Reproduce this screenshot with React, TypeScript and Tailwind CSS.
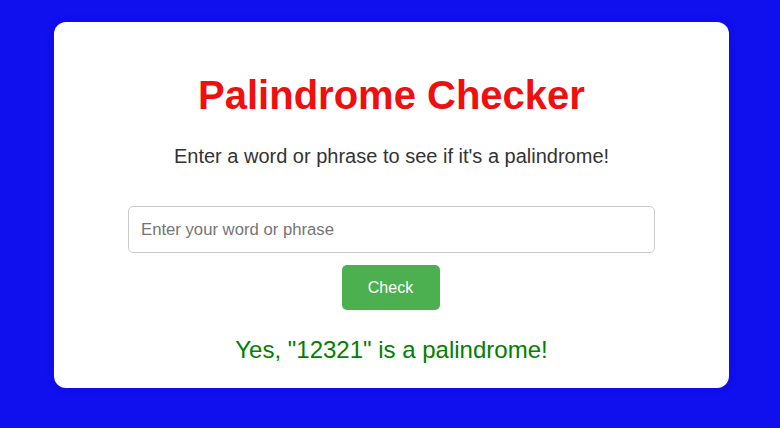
import { useState } from "react";

export default function App() {
  const [text, setText] = useState("");
  const [result] = useState('Yes, "12321" is a palindrome!');

  return (
    <div className="min-h-screen w-full bg-[#100fee] pl-[54px] pt-[22px] font-['Liberation_Sans',Arial,sans-serif]">
      <div className="w-[675px] rounded-[12px] bg-white px-[74px] pt-[50px] pb-[25px] shadow-[0_0_10px_rgba(0,0,0,0.1)] flex flex-col items-center">
        <h1 className="text-[40px] leading-[46px] font-bold text-[#f00f0f]">
          Palindrome Checker
        </h1>

        <p className="mt-[27px] text-[20px] leading-[23px] text-[#333333]">
          Enter a word or phrase to see if it's a palindrome!
        </p>

        <input
          type="text"
          value={text}
          onChange={(e) => setText(e.target.value)}
          placeholder="Enter your word or phrase"
          className="mt-[38px] h-[47px] w-full rounded-[5px] border border-[#cccccc] px-[12px] text-[16.7px] text-[#333333] placeholder:text-[#757575] outline-none"
        />

        <button className="mt-[12px] h-[45px] w-[98px] -translate-x-[1px] rounded-[5px] bg-[#4caf50] text-[16px] text-white cursor-pointer">
          Check
        </button>

        <p className="mt-[26px] text-[24px] leading-[27px] text-[#008000]">
          {result}
        </p>
      </div>
    </div>
  );
}
